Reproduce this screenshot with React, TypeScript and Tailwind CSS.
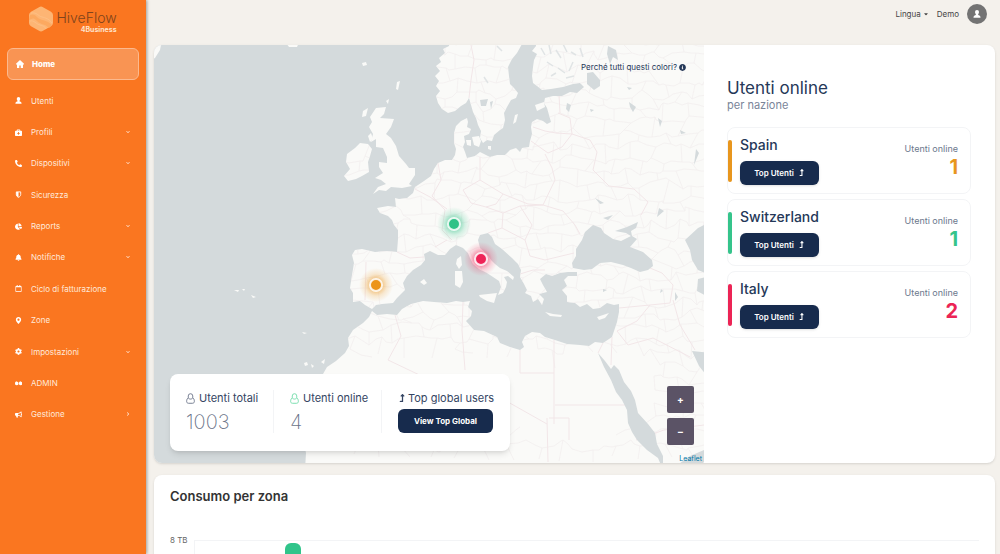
import type { IconType } from "react-icons";
import {
  FaBell,
  FaBriefcaseMedical,
  FaBullhorn,
  FaCaretDown,
  FaChartPie,
  FaChevronDown,
  FaChevronRight,
  FaCog,
  FaInfoCircle,
  FaLevelUpAlt,
  FaMapMarkerAlt,
  FaPhoneAlt,
  FaRegCalendar,
} from "react-icons/fa";

type IconProps = { className?: string };

function AdminIcon({ className }: IconProps) {
  return (
    <svg viewBox="0 0 16 16" fill="currentColor" className={className}>
      <path d="M0 10c0-3 2-5 5-5v2c2 0 3 1 3 3s-1 4-4 4-4-2-4-4zM9 10c0-3 2-5 5-5v2c2 0 3 1 3 3s-1 4-4 4-4-2-4-4z" />
    </svg>
  );
}

function HomeIcon({ className }: IconProps) {
  return (
    <svg viewBox="0 0 16 16" fill="currentColor" className={className}>
      <path d="M8 0L0 7.500V9h2v7h4.500v-5h3v5H14V9h2V7.500z" />
    </svg>
  );
}

function PawnIcon({ className }: IconProps) {
  return (
    <svg viewBox="0 0 16 16" fill="currentColor" className={className}>
      <path d="M8 0a4 4 0 0 1 4 4c0 2-.7 3.400-1.800 4.500 0 1.500.8 1.700 2.300 2.300C14.300 11.500 15 12.500 15 15.500H1c0-3 .7-4 2.500-4.700 1.500-.6 2.300-.8 2.300-2.300C4.700 7.400 4 6 4 4a4 4 0 0 1 4-4z" />
    </svg>
  );
}

function ShieldIcon({ className }: IconProps) {
  return (
    <svg viewBox="0 0 16 16" className={className}>
      <path d="M3 2h10v6c0 3-2 5-5 6.500C5 13 3 11 3 8z" fill="none" stroke="currentColor" strokeWidth="2" />
      <path d="M3 2h5v12.500C5 13 3 11 3 8z" fill="currentColor" />
    </svg>
  );
}

type NavItem = {
  label: string;
  icon: IconType | typeof AdminIcon;
  arrow?: "down" | "right";
};

const navItems: NavItem[] = [
  { label: "Utenti", icon: PawnIcon },
  { label: "Profili", icon: FaBriefcaseMedical, arrow: "down" },
  { label: "Dispositivi", icon: FaPhoneAlt, arrow: "down" },
  { label: "Sicurezza", icon: ShieldIcon },
  { label: "Reports", icon: FaChartPie, arrow: "down" },
  { label: "Notifiche", icon: FaBell, arrow: "down" },
  { label: "Ciclo di fatturazione", icon: FaRegCalendar },
  { label: "Zone", icon: FaMapMarkerAlt },
  { label: "Impostazioni", icon: FaCog, arrow: "down" },
  { label: "ADMIN", icon: AdminIcon },
  { label: "Gestione", icon: FaBullhorn, arrow: "right" },
];

const countries = [
  { name: "Spain", online: 1, bar: "bg-[#e8961e]", text: "text-[#e8961e]" },
  { name: "Switzerland", online: 1, bar: "bg-[#35c48b]", text: "text-[#35c48b]" },
  { name: "Italy", online: 2, bar: "bg-[#ec2455]", text: "text-[#ec2455]" },
];

const markers = [
  { x: 376, y: 285, color: "#ec9418" },
  { x: 454, y: 224, color: "#2fc287" },
  { x: 481, y: 259, color: "#ee2457" },
];

// Coastlines
const scandinavia =
  "M450 40L449 46 443 49 445 53 439 58 441 62 436 66 440 71 435 76 439 81 436 86 440 91 436 96 438 103 442 109 448 113 455 111 461 106 466 103 469 98 471 105 473 112 476 118 478 125 481 131 480 138 483 143 487 140 492 141 494 135 500 130 503 128 505 120 504 113 507 107 511 100 516 98 518 93 514 88 510 84 509 76 508 67 512 59 517 53 522 44 522 40Z";
const mainland =
  "M536 40L536 46 532 51 537 54 534 60 533 67 532 76 533 83 537 86 542 90 551 89 563 87 573 84 580 83 584 87 577 93 570 92 562 96 553 96 545 98 544 103 547 108 549 115 551 122 547 124 543 121 537 119 532 122 531 127 532 134 530 141 529 147 522 148 520 152 516 148 510 150 505 155 497 155 490 157 484 154 480 152 475 156 467 158 465 152 463 147 465 142 464 136 469 134 471 129 467 127 468 122 467 118 461 121 456 126 454 133 454 143 456 149 455 155 452 160 445 160 438 163 434 169 431 176 424 181 415 187 413 193 407 198 399 199 395 198 396 207 388 206 377 208 380 213 388 216 392 220 394 225 398 230 398 239 397 252 387 251 375 252 362 249 355 250 352 255 354 263 352 275 350 288 353 293 353 302 360 301 365 305 372 309 376 305 382 304 393 303 397 298 405 290 403 283 407 276 413 270 421 265 425 260 424 254 430 251 438 255 445 255 450 249 456 245 463 248 468 253 470 258 473 264 479 269 487 273 493 277 499 281 501 287 498 295 503 293 506 287 507 282 504 277 508 276 513 280 514 277 507 271 500 268 495 264 491 260 487 254 480 248 478 240 480 235 488 233 492 237 495 244 502 249 512 258 518 264 521 270 520 277 524 284 527 290 525 293 531 296 533 302 538 299 542 305 544 299 539 294 547 292 543 285 540 279 546 274 552 276 560 273 568 272 577 272 577 276 568 276 564 280 567 286 562 290 567 296 567 302 575 303 580 307 587 304 593 309 600 308 607 303 614 305 619 304 619 312 617 322 612 337 603 343 595 342 589 346 580 345 567 344 555 340 545 337 540 333 532 332 525 336 522 342 524 347 520 350 510 347 500 343 497 337 484 331 474 330 466 321 471 316 472 311 468 307 470 301 463 302 456 301 447 303 434 302 423 301 411 304 402 309 397 315 387 314 377 315 372 311 369 317 363 323 353 330 348 338 349 346 345 353 336 361 327 367 323 374 314 400 305 430 304 444 306 453 305 470 720 470 720 40Z";
const islands = [
  // Great Britain
  "M376 108L386 107 384 114 380 118 394 119 391 127 386 134 391 138 396 146 399 156 406 164 409 168 415 168 415 175 409 184 412 186 402 188 391 187 386 191 379 190 373 194 378 187 386 184 381 180 375 178 383 173 379 167 379 162 387 163 387 157 383 148 376 147 376 139 371 142 373 134 369 127 372 122 370 117Z",
  // Ireland
  "M355 148L360 143 368 144 372 149 370 156 368 162 369 172 362 176 356 179 348 181 344 176 350 169 346 162 347 154Z",
  // Mediterranean
  "M479 295L488 294 497 293 494 303 487 301 480 297Z",
  "M455 271L462 271 463 282 460 288 455 285Z",
  "M457 259L461 256 462 265 459 269 456 264Z",
  "M545 312L553 314 562 315 561 317 550 316Z",
  "M597 317L609 313 605 318 599 320Z",
  "M420 282L424 279 427 283 424 285Z",
  // Denmark and Baltic
  "M472 137L479 136 481 141 479 147 474 145Z",
  "M466 140L471 140 471 146 467 145Z",
  "M515 115L518 114 516 122 513 124Z",
  "M535 105L544 102 545 107 537 111Z",
  "M488 146L491 146 491 150 488 149Z",
  // North Atlantic
  "M362 63L366 62 367 65 363 66Z",
  "M397 82L400 81 398 90 396 89Z",
  "M363 111L368 108 366 116 362 117Z",
  "M386 101L389 99 388 104Z",
  "M368 136L371 133 373 139 370 142Z",
  "M284 40L300 40 297 47 289 47Z",
  "M150 40L162 40 160 50 155 58 150 60Z",
  // Azores, Madeira, Canaries
  "M234 290L239 290 238 292ZM242 289L245 289 244 291ZM251 295L256 297 253 298Z",
  "M302 332L307 333 304 334ZM304 363L307 362 308 365 305 366ZM311 364L314 366 312 368ZM321 362L325 359 324 364Z",
];
const water = [
  // Black Sea and Azov
  "M582 240L585 232 593 225 601 228 604 233 613 239 621 241 631 236 626 233 615 231 627 227 638 222 636 228 631 231 632 236 637 239 630 247 643 252 652 260 653 266 648 270 640 272 631 268 623 265 611 262 600 263 592 269 584 270 573 268 572 263 576 256 576 249Z",
  // Caspian
  "M710 222L698 228 685 240 690 250 692 260 698 270 710 275Z",
  "M710 276L698 279 697 291 710 298Z",
  // Red Sea and gulfs
  "M598 353L605 361 611 369 614 365 619 370 624 382 631 391 635 400 638 413 648 424 655 433 657 444 663 456 663 470 658 458 647 450 637 440 632 432 628 423 627 410 622 400 616 392 611 380 604 367Z",
  "M692 351L710 353 710 380 699 366Z",
  "M676 466L690 456 704 450 710 456 700 466Z",
  // Lakes
  "M587 73L593 72 600 80 600 86 594 90 587 84Z",
  "M608 46L616 50 618 60 613 57 610 64 607 54Z",
  "M567 103L571 105 569 112 566 109Z",
  "M629 102L636 107 633 112 630 107Z",
  "M480 100L488 99 486 106 481 106ZM490 102L493 101 491 109Z",
  "M590 109L594 110 591 112ZM627 87L632 88 629 90Z",
  "M661 289L663 291 660 293ZM675 292L678 297 675 301Z",
  "M658 118L662 121 660 127ZM680 130L686 133 681 134ZM659 208L664 211 657 217ZM696 149L699 153 694 165Z",
  "M595 198L604 203 600 204ZM603 218L613 215 608 220ZM603 289L607 290 603 292Z",
];
const borders =
  "M470 40L474 60 471 80 469 98M533 127L545 131 556 133 572 134M531 141L548 153 562 147 572 134 570 118 558 113M572 134L590 140 597 152 593 170 609 186 634 189 648 202 641 215M480 157L480 180 503 194 528 204 543 205 555 180 552 168 545 154M438 163L441 180 432 196 445 210 442 230 452 240M415 189L430 197 447 209M480 180L463 190 471 203 486 207 496 204 503 194M486 207L503 213 520 206 543 205 563 211 575 225 580 234M503 213L502 228 488 233M520 206L532 225 525 240 530 256 545 260 574 253M502 228L525 240M397 252L410 258 424 257M366 262L365 300M520 274L533 270 545 270M650 268L662 273 673 285 670 303 650 305 619 308M650 305L637 321 617 331M673 300L680 325 695 350M617 331L628 345 653 338 690 357M612 337L611 365M603 343L598 353M395 315L401 336 388 360 430 380 508 402 547 424M463 302L462 330 465 370M554 340L554 424M547 418L548 462M555 405L625 405M549 418L569 418 569 440M520 350L520 373 554 373M636 440L664 430 704 425M447 240L435 247M560 113L559 95";

// Fine network of province lines, irregular brick cells with a fixed seed
function provinceLines() {
  let seed = 11;
  const rand = () => {
    seed = (seed * 16807) % 2147483647;
    return seed / 2147483647 - 0.5;
  };
  const step = 13;
  const points: number[][][] = [];
  for (let row = 0; row < 33; row++) {
    points.push([]);
    for (let col = 0; col < 31; col++) {
      points[row].push([
        Math.round(342 + col * step + rand() * 11),
        Math.round(42 + row * step + rand() * 11),
      ]);
    }
  }
  let d = "";
  for (let row = 0; row < 32; row++) {
    for (let col = 0; col < 30; col++) {
      const [x, y] = points[row][col];
      // Sahara stays mostly empty
      if (y > 350 && y < 435 && x < 640) continue;
      const [rx, ry] = points[row][col + 1];
      const [bx, by] = points[row + 1][col];
      d += `M${x} ${y}L${Math.round((x + rx) / 2 + rand() * 5)} ${Math.round((y + ry) / 2 + rand() * 5)} ${rx} ${ry}`;
      if ((row + col) % 2 === 0) d += `M${x} ${y}L${bx} ${by}`;
    }
  }
  return d;
}

const provinces = provinceLines();

function EuropeMap() {
  return (
    <svg
      viewBox="154 45 550 418"
      preserveAspectRatio="xMidYMid slice"
      className="block h-full w-full bg-[#d4dadc]"
      role="img"
      aria-label="Mappa utenti"
    >
      <defs>
        <clipPath id="land">
          <path d={scandinavia} />
          <path d={mainland} />
          <path d={islands[1]} />
        </clipPath>
        {markers.map((m, i) => (
          <radialGradient key={i} id={`glow-${i}`}>
            <stop offset="0.35" stopColor={m.color} stopOpacity="0.5" />
            <stop offset="0.65" stopColor={m.color} stopOpacity="0.18" />
            <stop offset="1" stopColor={m.color} stopOpacity="0" />
          </radialGradient>
        ))}
      </defs>
      <g fill="#fafaf8" strokeLinejoin="round">
        <path d={scandinavia} />
        <path d={mainland} />
        {islands.map((d) => (
          <path key={d} d={d} />
        ))}
      </g>
      <g clipPath="url(#land)" fill="none">
        <path d={provinces} stroke="#f2efef" strokeWidth="0.8" />
        <path d={borders} stroke="#f2e6e8" strokeWidth="1" strokeLinejoin="round" />
        <path
          d="M541 48l4 7M549 45l2 9M556 50l5 8M547 62l6 4M563 44l4 8M571 52l5 3M558 68l7 5M573 62l-4 9M580 48l3 9M551 76l5-3M566 78l8-2M497 46l5 5M484 77l4 6"
          stroke="#e0e4e5"
          strokeWidth="1.5"
        />
      </g>
      <g fill="#d4dadc">
        {water.map((d) => (
          <path key={d} d={d} />
        ))}
      </g>
      {markers.map((m, i) => (
        <g key={i}>
          <circle cx={m.x} cy={m.y} r="17" fill={`url(#glow-${i})`} />
          <circle cx={m.x} cy={m.y} r="6" fill={m.color} stroke="#fff" strokeOpacity="0.85" strokeWidth="2" />
        </g>
      ))}
    </svg>
  );
}

function Logo() {
  return (
    <a href="#" className="flex h-12 items-start justify-center gap-[3px] pt-[6px]">
      <svg viewBox="0 0 24 26" className="h-[26px] w-6">
        <path
          d="M10 1.200Q12 0 14 1.200L22 5.800Q24 7 24 9V17Q24 19 22 20.200L14 24.800Q12 26 10 24.800L2 20.200Q0 19 0 17V9Q0 7 2 5.800Z"
          fill="#fdb574"
        />
        <path d="M1 9c5-2 6 2 10 4s7 1 12 6l-3 3C15 17 12 19 8 15S3 13 0 14z" fill="#fca960" />
        <path d="M2 7c6-1 7 3 11 4s7 2 10 6M1 15c4-1 6 3 10 4s5 2 6 4" stroke="#fec68f" strokeWidth="0.6" fill="none" />
      </svg>
      <span className="flex flex-col items-end pt-1">
        <span className="text-sm leading-4 font-light text-[#80441c]">HiveFlow</span>
        <span className="text-[7px] leading-2 font-bold text-[#ffe3cb]">4Business</span>
      </span>
    </a>
  );
}

function Sidebar() {
  return (
    <aside className="z-10 w-[146px] shrink-0 bg-[#fa7620] text-[8px] text-[#ffe9da] shadow-[1px_0_3px_rgba(0,0,0,0.35)]">
      <Logo />
      <nav>
        <a
          href="#"
          className="mx-[7px] flex h-8 items-center gap-2 rounded-md border border-[#fcb98e] bg-[#f99453] px-2 font-extrabold text-white"
        >
          <HomeIcon className="size-2" />
          Home
        </a>
        <ul className="mt-[5px] grid h-[345px] auto-rows-fr">
          {navItems.map(({ label, icon: Icon, arrow }) => (
            <li key={label} className="grid">
              <a href="#" className="flex items-center gap-[9px] pr-4 pl-[15px]">
                <Icon className="size-[7px] text-white" />
                <span className="flex-1">{label}</span>
                {arrow === "down" && <FaChevronDown className="size-1" />}
                {arrow === "right" && <FaChevronRight className="size-1" />}
              </a>
            </li>
          ))}
        </ul>
      </nav>
    </aside>
  );
}

function PersonIcon({ className }: IconProps) {
  return (
    <svg viewBox="0 0 10 12" fill="none" stroke="currentColor" className={className}>
      <path d="M2.500 5V3.200a2.500 2.500 0 0 1 5 0V5" />
      <path d="M2.800 5C1.300 5.800.7 7.500.7 9.200c0 1.300.8 2.100 2.100 2.100h4.400c1.300 0 2.100-.8 2.100-2.100C9.300 7.500 8.700 5.800 7.200 5M2.500 5.500c1 1.500 4 1.500 5 0" />
    </svg>
  );
}

function StatsCard() {
  return (
    <div className="absolute bottom-3 left-4 flex h-[77px] items-center rounded-lg bg-white px-4 pb-[2px] text-[11px] text-[#344563] shadow-md">
      <div className="flex h-[43px] w-[88px] flex-col border-r border-gray-100">
        <p className="flex h-4 items-center gap-1">
          <PersonIcon className="h-[11px] w-[9px] text-[#6b7489]" />
          Utenti totali
        </p>
        <p className="mt-1 text-xl leading-6 font-extralight text-[#6b7489]">1003</p>
      </div>
      <div className="flex h-[43px] w-[108px] flex-col border-r border-gray-100 pl-4">
        <p className="flex h-4 items-center gap-1">
          <PersonIcon className="h-[11px] w-[9px] text-[#6fdba8]" />
          Utenti online
        </p>
        <p className="mt-1 text-xl leading-6 font-extralight text-[#6b7489]">4</p>
      </div>
      <div className="flex h-[43px] flex-col pl-4">
        <p className="flex h-4 items-center gap-[2px]">
          <FaLevelUpAlt className="size-2" />
          Top global users
        </p>
        <button className="mt-[3px] h-6 w-[95px] rounded-md bg-[#172b4d] text-[8px] font-bold text-white">
          View Top Global
        </button>
      </div>
    </div>
  );
}

function UsersPanel() {
  return (
    <div className="w-[291px] shrink-0 pt-[33px] pr-6 pl-[23px]">
      <h2 className="text-[17px] leading-5 text-[#253858]">Utenti online</h2>
      <p className="text-[11px] leading-[14px] text-[#7a8599]">per nazione</p>
      <ul className="mt-[15px] flex flex-col gap-[5px]">
        {countries.map((c) => (
          <li key={c.name} className="flex h-[67px] items-center rounded-lg border border-gray-100">
            <span className={`h-[42px] w-1 rounded-sm ${c.bar}`} />
            <div className="ml-2 flex-1">
              <h3 className="text-sm leading-4 font-medium text-[#253858]">{c.name}</h3>
              <button className="mt-2 flex h-6 w-[79px] items-center justify-center gap-1 rounded-md bg-[#172b4d] text-[8px] font-semibold text-white shadow-sm">
                Top Utenti
                <FaLevelUpAlt className="size-[7px]" />
              </button>
            </div>
            <div className="pr-3 text-right">
              <p className="text-[9px] leading-3 text-[#6b778c]">Utenti online</p>
              <p className={`text-xl leading-6 font-bold ${c.text}`}>{c.online}</p>
            </div>
          </li>
        ))}
      </ul>
    </div>
  );
}

export default function App() {
  return (
    <div className="flex h-screen overflow-hidden bg-[#f4f1ec] font-['Inter','Open_Sans',sans-serif]">
      <Sidebar />
      <div className="min-w-0 flex-1 pr-[5px] pl-2">
        <header className="flex h-[45px] items-start justify-end pt-1 pr-2 text-[8px] text-[#444]">
          <div className="flex h-5 items-center gap-2">
            <button className="flex items-center gap-[2px]">
              Lingua <FaCaretDown className="size-[6px]" />
            </button>
            <span>Demo</span>
            <button aria-label="Profilo" className="grid size-5 place-items-center rounded-full bg-[#737373]">
              <PawnIcon className="size-2 text-white" />
            </button>
          </div>
        </header>

        <section className="flex h-[418px] overflow-hidden rounded-lg bg-white shadow-sm">
          <div className="relative min-w-0 flex-1">
            <EuropeMap />
            <a
              href="#"
              className="absolute top-4 right-[18px] flex items-center gap-[2px] text-[8px] leading-3 text-[#253858]"
            >
              Perché tutti questi colori?
              <FaInfoCircle className="size-[7px]" />
            </a>
            <StatsCard />
            <div className="absolute right-[10px] bottom-[18px] flex flex-col gap-[5px] text-[10px] font-bold text-white">
              <button className="size-[27px] rounded-xs bg-[#5b5366]">+</button>
              <button className="size-[27px] rounded-xs bg-[#5b5366]">−</button>
            </div>
            <a href="#" className="absolute right-[2px] bottom-0 text-[7px] leading-[9px] text-[#0078a8]">
              Leaflet
            </a>
          </div>
          <UsersPanel />
        </section>

        <section className="mt-3 rounded-lg bg-white px-4 pt-[11px] pb-4 shadow-sm">
          <h2 className="text-[13px] leading-5 font-semibold text-[#333]">Consumo per zona</h2>
          <div className="mt-7 flex gap-1 text-[8px] leading-3 text-[#666]">
            <span className="w-5">8 TB</span>
            <div className="mt-[6px] flex h-40 flex-1 border-t border-l border-gray-100 pt-[2px] pl-[90px]">
              <div className="w-4 rounded-t-md bg-[#30c48a]" />
            </div>
          </div>
        </section>
      </div>
    </div>
  );
}
